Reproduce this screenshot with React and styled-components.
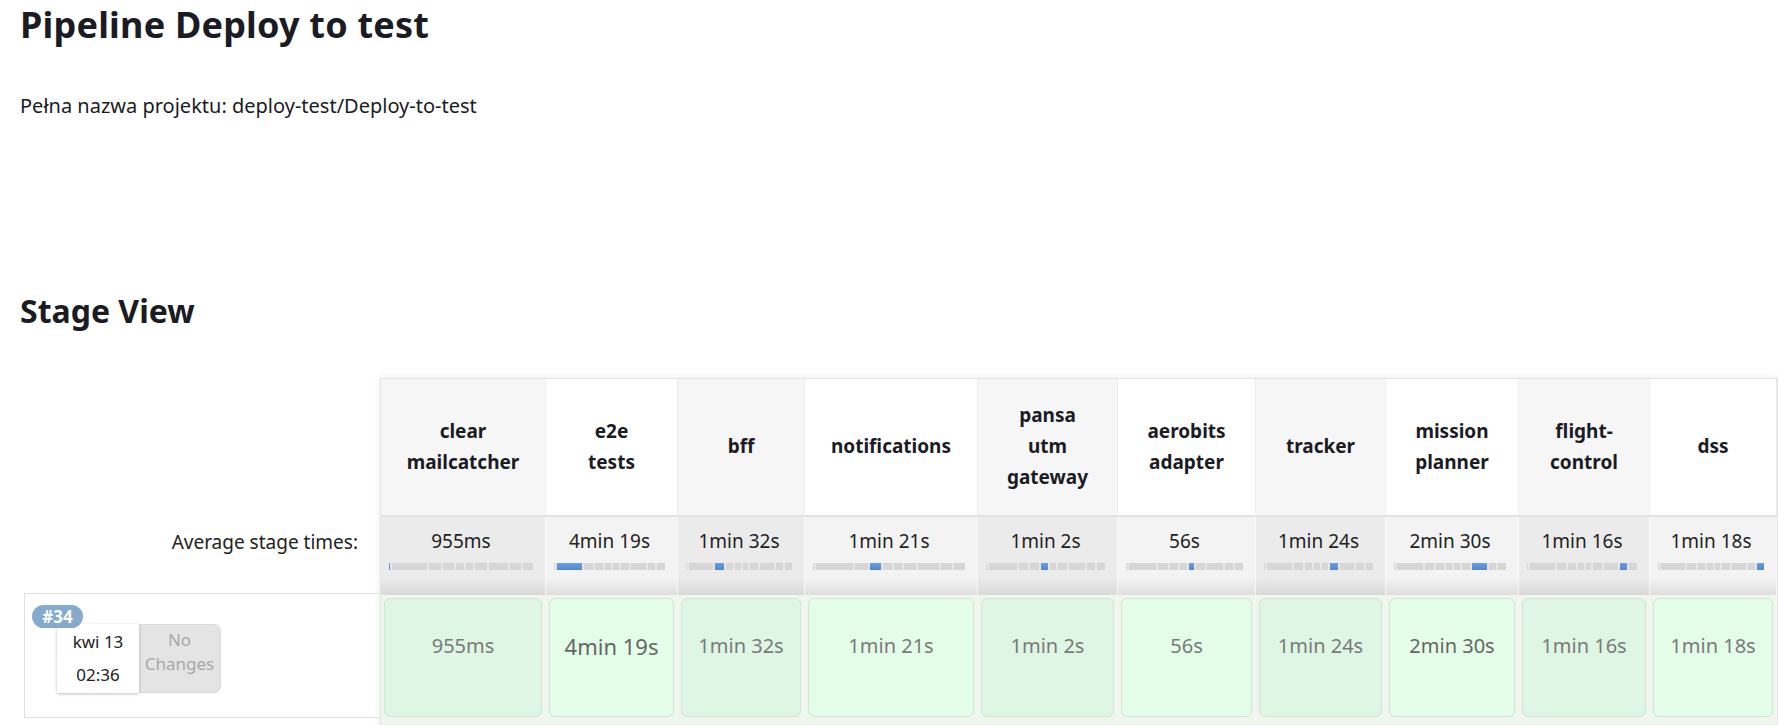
import React from "react";
import styled, { createGlobalStyle } from "styled-components";

const stages = [
  { name: ["clear", "mailcatcher"], width: 165, time: "955ms", secs: 0.955 },
  { name: ["e2e", "tests"], width: 132, time: "4min 19s", secs: 259, size: 22 },
  { name: ["bff"], width: 127, time: "1min 32s", secs: 92 },
  { name: ["notifications"], width: 173, time: "1min 21s", secs: 81 },
  { name: ["pansa", "utm", "gateway"], width: 140, time: "1min 2s", secs: 62 },
  { name: ["aerobits", "adapter"], width: 138, time: "56s", secs: 56 },
  { name: ["tracker"], width: 130, time: "1min 24s", secs: 84 },
  { name: ["mission", "planner"], width: 133, time: "2min 30s", secs: 150, size: 20 },
  { name: ["flight-", "control"], width: 131, time: "1min 16s", secs: 76 },
  { name: ["dss"], width: 127, time: "1min 18s", secs: 78 },
];

const GlobalStyle = createGlobalStyle`
  body {
    margin: 0;
    background: #fff;
    font-family: "Noto Sans", Lato, sans-serif;
    color: #1b1b24;
    overflow: hidden;
  }
`;

function App() {
  return (
    <Page>
      <GlobalStyle />
      <Title>Pipeline Deploy to test</Title>
      <FullName>Pełna nazwa projektu: deploy-test/Deploy-to-test</FullName>
      <SectionTitle>Stage View</SectionTitle>

      <StageView>
        <HistoryColumn>
          <HistoryBlank />
          <AverageLabel>Average stage times:</AverageLabel>
          <BuildInfo>
            <BuildBadge>#34</BuildBadge>
            <DateBox>
              <span>kwi 13</span>
              <span>02:36</span>
            </DateBox>
            <ChangesBox>
              <span>No</span>
              <span>Changes</span>
            </ChangesBox>
          </BuildInfo>
        </HistoryColumn>

        <StageGrid $cols={stages.map((s) => s.width)}>
          {stages.map((s, i) => (
            <StageHeader key={"h" + i} $alt={i % 2 === 0}>
              {s.name.map((line) => (
                <span key={line}>{line}</span>
              ))}
            </StageHeader>
          ))}
          {stages.map((s, i) => (
            <AverageCell key={"a" + i} $alt={i % 2 === 0}>
              <AverageTime>{s.time}</AverageTime>
              <Track>
                {stages.map((t, j) => (
                  <Segment key={j} $grow={t.secs} $active={i === j} />
                ))}
              </Track>
            </AverageCell>
          ))}
          {stages.map((s, i) => (
            <BuildCell key={"b" + i}>
              <StageBox $alt={i % 2 === 0} $size={s.size}>
                {s.time}
              </StageBox>
            </BuildCell>
          ))}
        </StageGrid>
      </StageView>
    </Page>
  );
}

const Page = styled.div`
  padding: 3px 0 0 20px;
`;

const Title = styled.h1`
  margin: 0;
  font-size: 36px;
  line-height: 1.2;
  font-weight: 700;
  letter-spacing: 0.2px;
`;

const FullName = styled.p`
  margin: 48px 0 0;
  font-size: 20px;
  line-height: 1.2;
  color: #1b1b24;
`;

const SectionTitle = styled.h2`
  margin: 174px 0 0;
  font-size: 32px;
  line-height: 1.2;
  font-weight: 700;
`;

const StageView = styled.div`
  display: flex;
  margin: 47px 0 0 4px;
  align-items: flex-start;
`;

const HistoryColumn = styled.div`
  width: 356px;
  flex: none;
  display: flex;
  flex-direction: column;
`;

const HistoryBlank = styled.div`
  height: 138px;
`;

const AverageLabel = styled.div`
  height: 77px;
  box-sizing: border-box;
  padding: 14px 22px 0 0;
  text-align: right;
  font-size: 19px;
  line-height: 24px;
  color: #222;
`;

const BuildInfo = styled.div`
  position: relative;
  height: 125px;
  box-sizing: border-box;
  border: 1px solid #e0e0e0;
  border-right: none;
  display: flex;
  padding: 30px 0 0 32px;
`;

/* badge sits over the top-left corner of the date box */
const BuildBadge = styled.div`
  position: absolute;
  top: 11px;
  left: 7px;
  width: 51px;
  height: 23px;
  border-radius: 12px;
  background: #85aacd;
  color: #fff;
  font-size: 17px;
  font-weight: 700;
  line-height: 23px;
  text-align: center;
  z-index: 1;
`;

const DateBox = styled.div`
  width: 82px;
  height: 69px;
  background: #fff;
  box-shadow: 0 1px 3px rgba(0, 0, 0, 0.25);
  display: flex;
  flex-direction: column;
  align-items: center;
  justify-content: center;
  gap: 9px;
  font-size: 17px;
  line-height: 24px;
  color: #222;
  z-index: 0;
`;

const ChangesBox = styled.div`
  width: 82px;
  height: 69px;
  box-sizing: border-box;
  background: #e4e4e4;
  border: 1px solid #dadada;
  border-left: none;
  border-radius: 0 7px 7px 0;
  display: flex;
  flex-direction: column;
  align-items: center;
  padding-top: 3px;
  font-size: 17px;
  line-height: 24px;
  color: #a8a8a8;
`;

const StageGrid = styled.div`
  display: grid;
  grid-template-columns: ${(p) => p.$cols.map((w) => w + "px").join(" ")};
  grid-template-rows: 138px 78px 129px 20px;
  border: 1px solid #e4e4e4;
  border-bottom: none;
  box-shadow: 0 0 8px rgba(0, 0, 0, 0.08);
  background: #ececec;
`;

const StageHeader = styled.div`
  background: ${(p) => (p.$alt ? "#f6f6f6" : "#fff")};
  border-right: 1px solid #ececec;
  border-bottom: 2px solid #e2e2e2;
  display: flex;
  flex-direction: column;
  align-items: center;
  justify-content: center;
  font-size: 19px;
  font-weight: 700;
  line-height: 31px;
  color: #1b1b24;
  text-align: center;
`;

const AverageCell = styled.div`
  background: ${(p) =>
    p.$alt
      ? "linear-gradient(to bottom, #ebebeb 0%, #ebebeb 78%, #d9d9d9 100%)"
      : "linear-gradient(to bottom, #f3f3f3 0%, #f3f3f3 78%, #dedede 100%)"};
  border-right: 1px solid #f7f7f7;
  padding: 12px 12px 0 8px;
  display: flex;
  flex-direction: column;
  align-items: stretch;
`;

const AverageTime = styled.div`
  text-align: center;
  font-size: 19px;
  line-height: 24px;
  color: #222;
`;

const Track = styled.div`
  display: flex;
  gap: 2px;
  height: 7px;
  margin-top: 10px;
  background: #e6e6e6;
`;

const Segment = styled.div`
  flex: ${(p) => p.$grow} 1 0;
  min-width: 1px;
  background: ${(p) =>
    p.$active ? "linear-gradient(#6d9ee0, #4f86cf)" : "#d6d6d6"};
`;

const BuildCell = styled.div`
  background: #eef6ee;
  padding: 3px 3px 7px;
  border-right: 1px solid #f2f7f2;
`;

const StageBox = styled.div`
  height: 100%;
  box-sizing: border-box;
  background: ${(p) => (p.$alt ? "#def6e3" : "#e4fde8")};
  border: 1px solid #d2e4d5;
  border-radius: 6px;
  display: flex;
  justify-content: center;
  padding-top: 34px;
  font-size: ${(p) => p.$size || 20}px;
  line-height: 26px;
  color: ${(p) => (p.$size ? "#666" : "#7a7a7a")};
`;

export default App;
